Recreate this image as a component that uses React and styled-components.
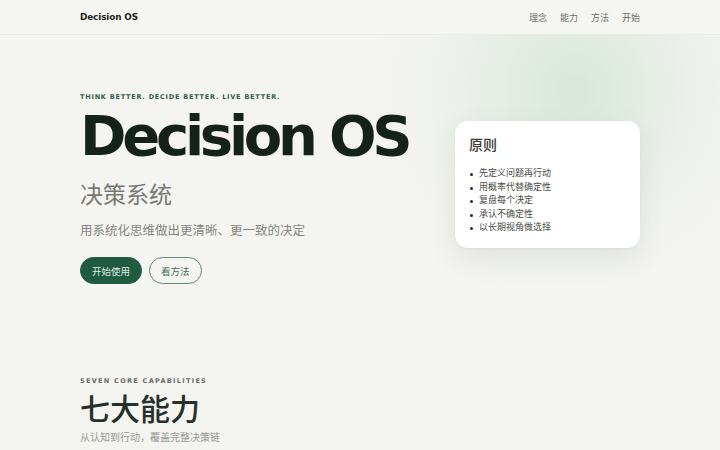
import React from "react";
import styled, { createGlobalStyle } from "styled-components";

const Global = createGlobalStyle`
  html, body { margin: 0; padding: 0; }
  body {
    background: #f4f4f0;
    font-family: "DejaVu Sans", "Noto Sans CJK SC", sans-serif;
    color: #1a241d;
  }
  * { box-sizing: border-box; }
`;

const Page = styled.div`
  width: 720px;
  height: 450px;
  overflow: hidden;
  background:
    radial-gradient(circle at 575px 90px, rgba(208, 227, 212, 0.8) 0, rgba(216, 231, 219, 0.5) 80px, rgba(232, 239, 232, 0.2) 160px, rgba(244, 244, 240, 0) 220px),
    #f4f4f0;
`;

const Nav = styled.header`
  height: 35px;
  padding: 0 80px;
  display: flex;
  align-items: center;
  justify-content: space-between;
  background: #f5f5f2;
  border-bottom: 1px solid #ebebe6;
`;

const Brand = styled.div`
  font-size: 8.8px;
  font-weight: 700;
  letter-spacing: -0.01em;
  color: #1d2420;
`;

const Links = styled.nav`
  display: flex;
  gap: 13px;
`;

const Link = styled.a`
  font-size: 9px;
  color: #6f6f6a;
  text-decoration: none;
`;

const Hero = styled.section`
  padding: 57px 80px 0;
  display: grid;
  grid-template-columns: minmax(0, 1fr) 185px;
  column-gap: 35px;
  align-items: start;
`;

const Left = styled.div`
  display: flex;
  flex-direction: column;
`;

const Eyebrow = styled.div`
  font-size: 6.5px;
  line-height: 10px;
  font-weight: 700;
  letter-spacing: ${(p) => p.$spacing || "0.12em"};
  color: ${(p) => p.$color || "#2f5f48"};
`;

const Title = styled.h1`
  margin: 6px 0 0;
  font-size: 56px;
  line-height: 56px;
  font-weight: 700;
  letter-spacing: -0.076em;
  color: #15221a;
  white-space: nowrap;
`;

const Subtitle = styled.h2`
  margin: 16px 0 0;
  font-size: 23px;
  line-height: 30px;
  font-weight: 400;
  color: #7a7a74;
`;

const Lead = styled.p`
  margin: 11px 0 0;
  font-size: 12.5px;
  line-height: 20px;
  color: #85857f;
`;

const Actions = styled.div`
  margin-top: 16px;
  display: flex;
  gap: 7px;
`;

const Button = styled.button`
  height: 27px;
  padding: 0 11px;
  border-radius: 14px;
  font-family: inherit;
  font-size: 9.5px;
  display: flex;
  align-items: center;
  cursor: pointer;
  border: 1px solid ${(p) => (p.$primary ? "#1f5a41" : "#5f8a74")};
  background: ${(p) => (p.$primary ? "#1f5a41" : "transparent")};
  color: ${(p) => (p.$primary ? "#dfece4" : "#3f6d56")};
`;

const Card = styled.aside`
  margin-top: 29px;
  background: #ffffff;
  border-radius: 13px;
  padding: 14px 14px 13px;
  box-shadow: 0 10px 28px rgba(60, 80, 65, 0.1), 0 1px 3px rgba(0, 0, 0, 0.03);
`;

const CardTitle = styled.h3`
  margin: 0;
  font-size: 14px;
  line-height: 20px;
  font-weight: 500;
  color: #3a3a36;
`;

const List = styled.ul`
  margin: 12px 0 0;
  padding: 0 0 0 10px;
  list-style: none;
`;

const Item = styled.li`
  position: relative;
  font-size: 9px;
  line-height: 13.6px;
  color: #4a4a45;
  &::before {
    content: "";
    position: absolute;
    left: -9px;
    top: 6px;
    width: 3px;
    height: 3px;
    border-radius: 50%;
    background: #2a2a27;
  }
`;

const Section = styled.section`
  padding: 92px 80px 0;
`;

const SectionTitle = styled.h2`
  margin: 6px 0 0;
  font-size: 30px;
  line-height: 36px;
  font-weight: 500;
  color: #25302a;
`;

const SectionText = styled.p`
  margin: 3px 0 0;
  font-size: 10px;
  line-height: 14px;
  color: #9a9a94;
`;

const principles = [
  "先定义问题再行动",
  "用概率代替确定性",
  "复盘每个决定",
  "承认不确定性",
  "以长期视角做选择",
];

export default function App() {
  return (
    <Page>
      <Global />
      <Nav>
        <Brand>Decision OS</Brand>
        <Links>
          <Link href="#">理念</Link>
          <Link href="#">能力</Link>
          <Link href="#">方法</Link>
          <Link href="#">开始</Link>
        </Links>
      </Nav>
      <Hero>
        <Left>
          <Eyebrow>THINK BETTER. DECIDE BETTER. LIVE BETTER.</Eyebrow>
          <Title>Decision OS</Title>
          <Subtitle>决策系统</Subtitle>
          <Lead>用系统化思维做出更清晰、更一致的决定</Lead>
          <Actions>
            <Button $primary>开始使用</Button>
            <Button>看方法</Button>
          </Actions>
        </Left>
        <Card>
          <CardTitle>原则</CardTitle>
          <List>
            {principles.map((p) => (
              <Item key={p}>{p}</Item>
            ))}
          </List>
        </Card>
      </Hero>
      <Section>
        <Eyebrow $color="#6c6c66" $spacing="0.2em">SEVEN CORE CAPABILITIES</Eyebrow>
        <SectionTitle>七大能力</SectionTitle>
        <SectionText>从认知到行动，覆盖完整决策链</SectionText>
      </Section>
    </Page>
  );
}
